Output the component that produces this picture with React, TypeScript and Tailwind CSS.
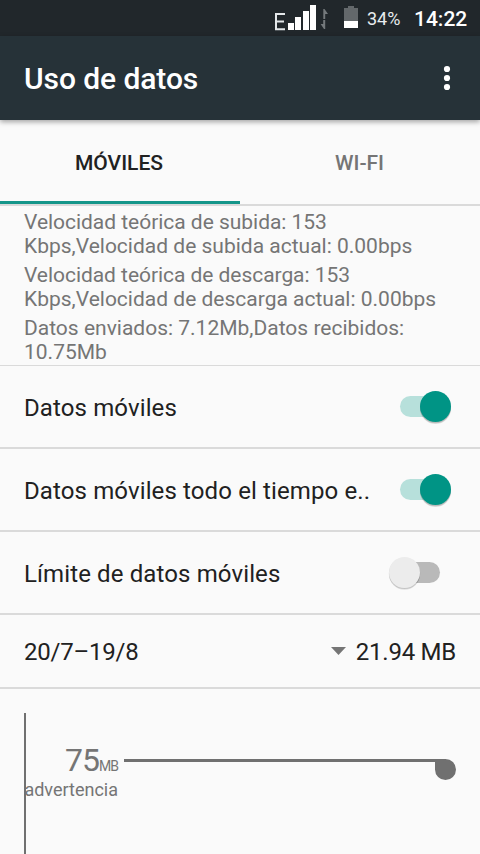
import React from 'react';

function StatusBar() {
  return (
    <div className="flex h-9 shrink-0 bg-[#21272b] text-white">
      <svg className="ml-[272px] h-9 w-[96px] shrink-0" viewBox="272 0 96 36">
        <path d="M285 14H276V29.2H285M276 21.4H284" fill="none" stroke="#e4e8ea" strokeWidth="2" />
        <path d="M288 23h6v7h-6zM295 17h6v13h-6zM303 11h6v19h-6zM310 5h6v25h-6z" fill="#fff" />
        <path d="M323.3 19V9h1.2l3.5 5h-2.8v5zM323.2 20h2v9h-1.2l-3.4-5h2.6z" fill="#74797c" />
        <path d="M348 6h6v2h4v13h-14V8h4z" fill="#63686b" />
        <path d="M344 21h14v7h-14z" fill="#fff" />
      </svg>
      <span className="ml-[-1px] w-[47px] shrink-0 whitespace-nowrap pt-px text-[18px] leading-9 text-[#e9edef]">34%</span>
      <span className="whitespace-nowrap pt-px text-[21px] font-medium leading-9">14:22</span>
    </div>
  );
}

function Switch({ on }: { on: boolean }) {
  return on ? (
    <svg className="h-11 w-[72px] shrink-0" viewBox="384 385 72 44">
      <rect x="400" y="396" width="46" height="21" rx="10.5" fill="#b7e0db" />
      <circle cx="435.5" cy="408.5" r="15.5" fill="#000" opacity=".1" />
      <circle cx="435.5" cy="407.7" r="15.5" fill="#000" opacity=".16" />
      <circle cx="435.5" cy="406.5" r="15.5" fill="#009485" />
    </svg>
  ) : (
    <svg className="h-11 w-[72px] shrink-0" viewBox="384 385 72 44">
      <rect x="394" y="396" width="46" height="21" rx="10.5" fill="#b9b9b9" />
      <circle cx="404.5" cy="408.2" r="15.5" fill="#000" opacity=".1" />
      <circle cx="404.5" cy="407.4" r="15.7" fill="#000" opacity=".12" />
      <circle cx="404.5" cy="406.5" r="15.5" fill="#ececec" />
    </svg>
  );
}

function SettingRow({ label, on }: { label: string; on: boolean }) {
  return (
    <div className="flex h-[83px] shrink-0 items-center justify-between border-b-2 border-[#dadada] px-6">
      <span className="whitespace-nowrap pt-0.5 text-[24px] leading-8 tracking-[0.12px]">{label}</span>
      <Switch on={on} />
    </div>
  );
}

export default function App() {
  return (
    <div className="flex h-[854px] w-[480px] flex-col overflow-hidden bg-[#fafafa] font-[Roboto,sans-serif] text-[#212121]">
      <StatusBar />
      <header className="relative flex h-[84px] shrink-0 items-center justify-between bg-[#263238] pl-6 pr-[27px] text-white shadow-[0_2px_5px_rgba(0,0,0,0.35)]">
        <h1 className="pt-0.5 text-[30px] font-medium leading-9 tracking-[-0.08px]">Uso de datos</h1>
        <svg className="h-7 w-3" viewBox="0 0 12 28">
          <circle cx="6" cy="5" r="3.1" fill="#fff" />
          <circle cx="6" cy="14" r="3.1" fill="#fff" />
          <circle cx="6" cy="23" r="3.1" fill="#fff" />
        </svg>
      </header>
      <nav className="flex h-[86px] shrink-0 border-b-2 border-[#dadada] text-[21px] font-medium leading-8">
        <div className="flex w-60 items-center justify-center border-b-[3px] border-[#15968a] pr-0.5 pt-[5px]">MÓVILES</div>
        <div className="flex w-60 items-center justify-center pr-px pt-0.5 text-[#757575]">WI-FI</div>
      </nav>
      <section className="flex h-40 shrink-0 flex-col gap-[5px] border-b border-[#dadada] px-6 pt-1 text-[21px] leading-6 text-[#757575]">
        <p><span className="tracking-[-0.03px]">Velocidad teórica de subida: 153</span><br />Kbps,Velocidad de subida actual: 0.00bps</p>
        <p><span className="tracking-[-0.05px]">Velocidad teórica de descarga: 153</span><br />Kbps,Velocidad de descarga actual: 0.00bps</p>
        <p>Datos enviados: 7.12Mb,Datos recibidos:<br />10.75Mb</p>
      </section>
      <SettingRow label="Datos móviles" on />
      <SettingRow label="Datos móviles todo el tiempo e.." on />
      <SettingRow label="Límite de datos móviles" on={false} />
      <div className="flex h-[74px] shrink-0 items-center border-b-2 border-[#dadada] px-6 text-[24px] leading-8">
        <span className="pt-0.5 tracking-[-0.22px]">20/7–19/8</span>
        <svg className="ml-auto mr-[10px] h-2 w-[15px]" viewBox="0 0 15 8">
          <path d="M0 0h15L7.5 8z" fill="#757575" />
        </svg>
        <span className="pt-0.5 tracking-[-0.25px]">21.94 MB</span>
      </div>
      <section className="flex flex-1 pl-6 pt-6 text-[#757575]">
        <div className="flex w-[100px] shrink-0 flex-col border-l-2 border-[#707070] pr-1.5 pt-[27px] text-right">
          <div className="h-[38px] whitespace-nowrap text-[32px] leading-10 tracking-[-1px]">75<span className="text-[14px]">MB</span></div>
          <div className="ml-[-2px] whitespace-nowrap text-[18px] leading-6">advertencia</div>
        </div>
        <svg className="mt-[46px] h-[21px] w-[332px]" viewBox="0 0 332 21">
          <path d="M0 0h321.5a10.5 10.5 0 1 1-10.5 10.5V3H0z" fill="#707070" />
        </svg>
      </section>
    </div>
  );
}
